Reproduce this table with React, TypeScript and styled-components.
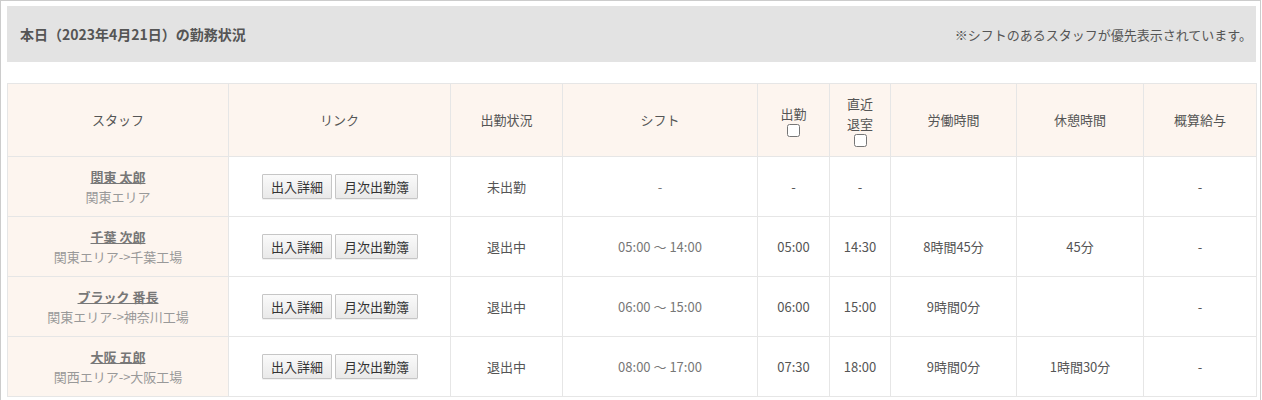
import React from 'react';
import styled, { createGlobalStyle } from 'styled-components';

const GlobalStyle = createGlobalStyle`
    body {
        margin: 0;
        background: #ffffff;
        font-family: "Noto Sans CJK JP", "Noto Sans", sans-serif;
        color: #555555;
    }
`;

const Frame = styled.div`
    border: 1px solid #cccccc;
    border-bottom: none;
    width: 1261px;
    box-sizing: border-box;
    padding: 5px 4px 0 6px;
    height: 400px;
    overflow: hidden;
`;

const PageHeader = styled.div`
    display: flex;
    justify-content: space-between;
    align-items: center;
    background: #e3e3e3;
    height: 56px;
    padding: 0 4px 0 13px;
    margin-bottom: 21px;
`;

const PageTitle = styled.h2`
    margin: 0;
    font-size: 14px;
    font-weight: bold;
    color: #555555;
`;

const Note = styled.span`
    font-size: 13px;
    color: #555555;
`;

const Table = styled.table`
    width: 1249px;
    border-collapse: collapse;
    table-layout: fixed;
    font-size: 13px;
`;

const HeadCell = styled.th<{ w: number }>`
    width: ${(p) => p.w}px;
    height: 72px;
    background: #fdf5ef;
    border: 1px solid #e6e6e6;
    font-weight: normal;
    color: #555555;
    line-height: 20px;
    padding: 0;
`;

const Cell = styled.td<{ tone?: 'dark' | 'light'; staff?: boolean }>`
    height: 59px;
    border: 1px solid #e6e6e6;
    text-align: center;
    padding: 0;
    background: ${(p) => (p.staff ? '#fdf5ef' : '#ffffff')};
    color: ${(p) => (p.tone === 'light' ? '#777777' : '#555555')};
    line-height: 20px;
`;

const NameLink = styled.a`
    display: block;
    color: #777777;
    font-weight: bold;
    font-size: 13px;
    text-decoration: underline;
`;

const Area = styled.div`
    color: #999999;
    font-size: 13px;
`;

const ButtonRow = styled.div`
    display: flex;
    justify-content: center;
    gap: 3px;
    padding-left: 1px;
`;

const Button = styled.button`
    height: 25px;
    padding: 0 8px;
    font-family: inherit;
    font-size: 13px;
    color: #333333;
    border: 1px solid #c6c6c6;
    border-radius: 1px;
    background: linear-gradient(#fafafa, #e9e9e9);
    box-shadow: 0 1px 0 rgba(0, 0, 0, 0.05);
`;

const Check = styled.input`
    display: block;
    margin: 0 auto;
    width: 13px;
    height: 13px;
`;

const columns = [
    { label: 'スタッフ', w: 220 },
    { label: 'リンク', w: 221 },
    { label: '出勤状況', w: 111 },
    { label: 'シフト', w: 194 },
    { label: '出勤', w: 71, check: true },
    { label: '直近\n退室', w: 60, check: true },
    { label: '労働時間', w: 125 },
    { label: '休憩時間', w: 126 },
    { label: '概算給与', w: 112 },
];

const rows = [
    { name: '関東 太郎', area: '関東エリア', status: '未出勤', shift: '-', inTime: '-', outTime: '-', work: '', rest: '', pay: '-' },
    { name: '千葉 次郎', area: '関東エリア->千葉工場', status: '退出中', shift: '05:00 ～ 14:00', inTime: '05:00', outTime: '14:30', work: '8時間45分', rest: '45分', pay: '-' },
    { name: 'ブラック 番長', area: '関東エリア->神奈川工場', status: '退出中', shift: '06:00 ～ 15:00', inTime: '06:00', outTime: '15:00', work: '9時間0分', rest: '', pay: '-' },
    { name: '大阪 五郎', area: '関西エリア->大阪工場', status: '退出中', shift: '08:00 ～ 17:00', inTime: '07:30', outTime: '18:00', work: '9時間0分', rest: '1時間30分', pay: '-' },
];

export default function App() {
    return (
        <>
            <GlobalStyle />
            <Frame>
                <PageHeader>
                    <PageTitle>本日（2023年4月21日）の勤務状況</PageTitle>
                    <Note>※シフトのあるスタッフが優先表示されています。</Note>
                </PageHeader>
                <Table>
                    <thead>
                        <tr>
                            {columns.map((c) => (
                                <HeadCell key={c.label} w={c.w}>
                                    {c.label.split('\n').map((l) => (
                                        <div key={l}>{l}</div>
                                    ))}
                                    {c.check && <Check type="checkbox" />}
                                </HeadCell>
                            ))}
                        </tr>
                    </thead>
                    <tbody>
                        {rows.map((r) => (
                            <tr key={r.name}>
                                <Cell staff>
                                    <NameLink href="#">{r.name}</NameLink>
                                    <Area>{r.area}</Area>
                                </Cell>
                                <Cell>
                                    <ButtonRow>
                                        <Button>出入詳細</Button>
                                        <Button>月次出勤簿</Button>
                                    </ButtonRow>
                                </Cell>
                                <Cell>{r.status}</Cell>
                                <Cell tone="light">{r.shift}</Cell>
                                <Cell>{r.inTime}</Cell>
                                <Cell>{r.outTime}</Cell>
                                <Cell>{r.work}</Cell>
                                <Cell>{r.rest}</Cell>
                                <Cell>{r.pay}</Cell>
                            </tr>
                        ))}
                    </tbody>
                </Table>
            </Frame>
        </>
    );
}
